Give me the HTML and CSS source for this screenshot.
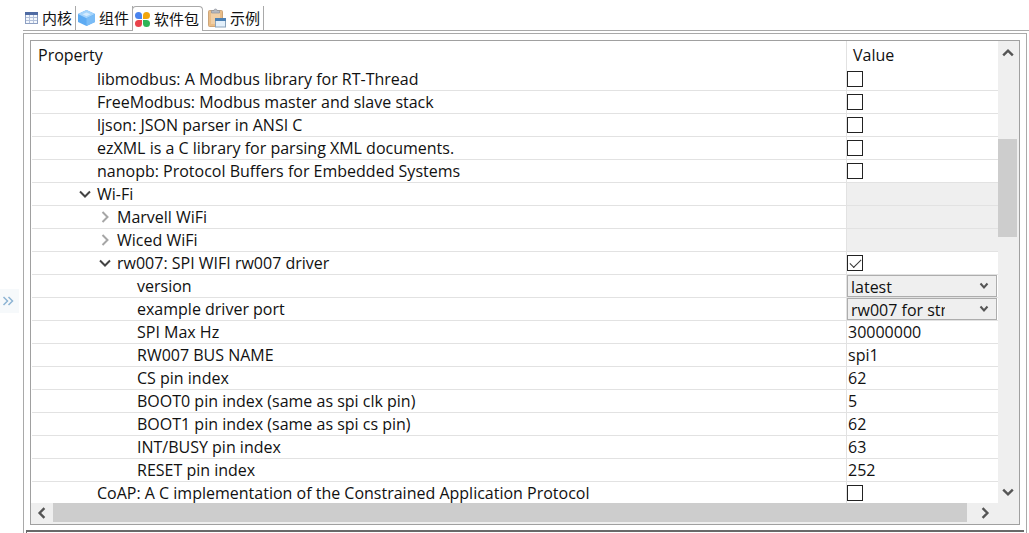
FILE: index.html
```
<!DOCTYPE html>
<html lang="zh-CN">
<head>
<meta charset="utf-8">
<title>RT-Thread Settings</title>
<link rel="stylesheet" href="styles.css">
</head>
<body>
<div class="app">
  <aside class="gutter">
    <button class="expand" type="button" aria-label="Expand">
      <svg width="12" height="10" viewBox="0 0 12 10"><path d="M1.500 1l4 4-4 4M6.500 1l4 4-4 4" fill="none" stroke="#8db4d4" stroke-width="1.500"/></svg>
    </button>
  </aside>
  <main class="editor">
    <nav class="tabs" role="tablist">
      <button class="tab" type="button" role="tab">
        <svg width="13" height="12" viewBox="0 0 13 12"><rect x=".5" y=".5" width="12" height="11" fill="#f4f8fd" stroke="#8d9fc2"/><path d="M0 0h13v3H0z" fill="#4f6ba3"/><path d="M1 5.500h11M1 8.500h11M4.500 3v8M8.500 3v8" stroke="#b4c1da"/></svg>
        <span>内核</span>
      </button>
      <button class="tab" type="button" role="tab">
        <svg width="17" height="16" viewBox="0 0 17 16"><path d="M8.500 0L17 4v8l-8.500 4L0 12V4z" fill="#5dabf3"/><path d="M8.500 0L17 4 8.500 8.300 0 4z" fill="#a5d4fb"/><path d="M8.500 8.300L17 4v8l-8.500 4z" fill="#7abcf6"/><path d="M8.500 2.500l4 1.700-4 2-4-2z" fill="#d4ebfe"/></svg>
        <span>组件</span>
      </button>
      <button class="tab tab-active" type="button" role="tab" aria-selected="true">
        <svg width="15" height="15" viewBox="0 0 15 15"><path d="M3.500 0a3.500 3.500 0 0 1 3.500 3.500V7H3.500a3.500 3.500 0 0 1 0-7z" fill="#4a84ee"/><path d="M11.500 0a3.500 3.500 0 0 1 0 7H8V3.500A3.500 3.500 0 0 1 11.500 0z" fill="#f2a60c"/><path d="M3.500 8H7v3.500A3.500 3.500 0 1 1 3.500 8z" fill="#e9434b"/><path d="M8 8h3.500A3.500 3.500 0 1 1 8 11.500z" fill="#2fb457"/></svg>
        <span>软件包</span>
      </button>
      <button class="tab tab-last" type="button" role="tab">
        <svg width="18" height="20" viewBox="0 0 18 20"><rect x=".5" y="2.500" width="14" height="16" rx="1" fill="#e9bd88" stroke="#cda578"/><path d="M3 5h9v11H3z" fill="#f0cfa6"/><path d="M3.500 5V2.500H6a1.500 1.500 0 0 1 3 0h2.500V5z" fill="#b5b9c0" stroke="#8f949c" stroke-width=".7"/><rect x="7.500" y="10.500" width="10" height="8.500" fill="#e3f0fb" stroke="#8aa3bb"/><path d="M7 10h11v3H7z" fill="#4b80b4"/></svg>
        <span>示例</span>
      </button>
    </nav>
    <div class="panel">
      <section class="tree">
        <div class="view">
          <table class="grid">
            <colgroup><col class="col-name"><col class="col-value"></colgroup>
            <thead><tr><th>Property</th><th>Value</th></tr></thead>
            <tbody>
              <tr><td class="l1"><label for="c1">libmodbus: A Modbus library for RT-Thread</label></td><td><input id="c1" class="check" type="checkbox"></td></tr>
              <tr><td class="l1"><label for="c2">FreeModbus: Modbus master and slave stack</label></td><td><input id="c2" class="check" type="checkbox"></td></tr>
              <tr><td class="l1"><label for="c3">ljson: JSON parser in ANSI C</label></td><td><input id="c3" class="check" type="checkbox"></td></tr>
              <tr><td class="l1"><label for="c4">ezXML is a C library for parsing XML documents.</label></td><td><input id="c4" class="check" type="checkbox"></td></tr>
              <tr><td class="l1"><label for="c5">nanopb: Protocol Buffers for Embedded Systems</label></td><td><input id="c5" class="check" type="checkbox"></td></tr>
              <tr><td class="l1 node"><div class="name"><svg class="arrow" viewBox="0 0 12 12"><path class="open" d="M1 3.500l5 5 5-5"/></svg>Wi-Fi</div></td><td class="empty"></td></tr>
              <tr><td class="l2 node"><div class="name"><svg class="arrow" viewBox="0 0 12 12"><path class="closed" d="M3.500 1l5 5-5 5"/></svg>Marvell WiFi</div></td><td class="empty"></td></tr>
              <tr><td class="l2 node"><div class="name"><svg class="arrow" viewBox="0 0 12 12"><path class="closed" d="M3.500 1l5 5-5 5"/></svg>Wiced WiFi</div></td><td class="empty"></td></tr>
              <tr><td class="l2 node"><div class="name"><svg class="arrow" viewBox="0 0 12 12"><path class="open" d="M1 3.500l5 5 5-5"/></svg><label for="c6">rw007: SPI WIFI rw007 driver</label></div></td><td><input id="c6" class="check" type="checkbox" checked></td></tr>
              <tr><td class="l3"><label for="s1">version</label></td><td><div class="combo"><select id="s1"><option>latest</option></select><svg viewBox="0 0 10 8"><path d="M1.500 1.500L5 5.500l3.500-4"/></svg></div></td></tr>
              <tr><td class="l3"><label for="s2">example driver port</label></td><td><div class="combo"><select id="s2"><option>rw007 for stm32</option></select><svg viewBox="0 0 10 8"><path d="M1.500 1.500L5 5.500l3.500-4"/></svg></div></td></tr>
              <tr><td class="l3">SPI Max Hz</td><td>30000000</td></tr>
              <tr><td class="l3">RW007 BUS NAME</td><td>spi1</td></tr>
              <tr><td class="l3">CS pin index</td><td>62</td></tr>
              <tr><td class="l3">BOOT0 pin index (same as spi clk pin)</td><td>5</td></tr>
              <tr><td class="l3">BOOT1 pin index (same as spi cs pin)</td><td>62</td></tr>
              <tr><td class="l3">INT/BUSY pin index</td><td>63</td></tr>
              <tr><td class="l3">RESET pin index</td><td>252</td></tr>
              <tr><td class="l1"><label for="c7">CoAP: A C implementation of the Constrained Application Protocol</label></td><td><input id="c7" class="check" type="checkbox"></td></tr>
            </tbody>
          </table>
        </div>
        <div class="vbar">
          <button type="button" aria-label="Scroll up"><svg viewBox="0 0 10 10"><path d="M1 7l4-4 4 4"/></svg></button>
          <div class="vtrack"><div class="vthumb"></div></div>
          <button type="button" aria-label="Scroll down"><svg viewBox="0 0 10 10"><path d="M1 3l4 4 4-4"/></svg></button>
        </div>
        <div class="hbar">
          <button type="button" aria-label="Scroll left"><svg viewBox="0 0 10 10"><path d="M7 1L3 5l4 4"/></svg></button>
          <div class="hthumb"></div>
          <button class="right" type="button" aria-label="Scroll right"><svg viewBox="0 0 10 10"><path d="M3 1l4 4-4 4"/></svg></button>
        </div>
      </section>
      <div class="next"></div>
    </div>
  </main>
</div>
</body>
</html>
```
FILE: styles.css
```
* { box-sizing: border-box; }
body {
  margin: 0;
  background: #fff;
  color: #111;
  font: 16px/22px "Open Sans", "Noto Sans CJK SC", sans-serif;
}
button { margin: 0; padding: 0; border: 0; background: none; font: inherit; color: inherit; }
svg { display: block; flex: none; }

.app { display: flex; height: 100vh; }
.gutter { width: 23px; padding-top: 289px; flex: none; }
.expand {
  display: flex; align-items: center; justify-content: center;
  width: 19px; height: 24px; padding-right: 4px;
  background: #f6f9fb;
}
.editor { display: flex; flex-direction: column; flex: 1; min-width: 0; }

.tabs { display: flex; align-items: flex-end; height: 31px; padding-top: 6px; border-bottom: 1px solid #a9a9a9; }
.tab {
  display: flex; align-items: center; gap: 4px;
  height: 24px; padding: 0 3px 0 2px;
  border-right: 1px solid #a9a9a9;
  font: 15px/24px "Noto Sans CJK SC", sans-serif;
  white-space: nowrap;
}
.tab-active {
  height: 25px; margin: 0 0 -1px -1px;
  background: #fff;
  border: 1px solid #a9a9a9; border-bottom: 0;
  border-radius: 4px 4px 0 0;
}
.tab-last { padding-left: 5px; }

.panel {
  display: flex; flex-direction: column; flex: 1; min-height: 0;
  margin: 2px 2px 0 0; padding: 6px 6px 0;
  border: 1px solid #a9a9a9; border-bottom: 0;
}
.tree {
  display: grid; grid-template-columns: 1fr 21px; grid-template-rows: 1fr 21px;
  flex: 1; min-height: 0;
  border: 1px solid #a0a0a0;
}
.view { overflow: hidden; min-height: 0; padding-left: 1px; }
.next { flex: none; height: 3px; margin: 5px -4px 0; border: 2px solid #696969; border-width: 2px 0 0 1px; }

.grid { width: 100%; table-layout: fixed; border-collapse: separate; border-spacing: 0; }
.col-value { width: 152px; }
.grid th { height: 27px; padding: 1px 6px 0; text-align: left; font-weight: 400; }
.grid td { height: 23px; padding: 0 0 0 1px; border-bottom: 1px solid #e2e2e2; white-space: nowrap; }
.grid th + th, .grid td + td { border-left: 1px solid #e2e2e2; }
.grid td.l1 { padding-left: 65px; }
.grid td.l2 { padding-left: 85px; }
.grid td.l3 { padding-left: 105px; }
.grid td.l1.node { padding-left: 47px; }
.grid td.l2.node { padding-left: 67px; }
.grid td.empty { background: #efefef; }
.name { display: flex; align-items: center; gap: 6px; }
.arrow { width: 12px; height: 12px; fill: none; stroke-width: 2; }
.open { stroke: #444; }
.closed { stroke: #a6a6a6; }

.check {
  display: block; appearance: none;
  width: 16px; height: 16px; margin: 0;
  border: 1px solid #222; background: #fff;
}
.grid td:has(.check), .grid td:has(.combo) { padding-left: 0; }
.check:checked::before {
  content: ""; display: block;
  width: 10px; height: 5px; margin: 3px 0 0 2px;
  border: solid #333; border-width: 0 0 1px 1px;
  transform: rotate(-45deg);
}
.combo { display: grid; grid-template-columns: 1fr 22px; align-items: center; height: 22px; margin-right: 1px; border: 1px solid #adadad; background: #efefef; }
.combo select {
  grid-area: 1 / 1 / 2 / 3; appearance: none;
  width: 100%; height: 20px; margin: 0; padding: 0 51px 0 3px;
  border: 0; background: transparent; color: inherit; font: inherit;
}
.combo svg {
  grid-area: 1 / 2; width: 10px; height: 8px; margin-left: 5px;
  fill: none; stroke: #555; stroke-width: 2; pointer-events: none;
}

.vbar, .hbar { display: flex; background: #efefef; }
.vbar { flex-direction: column; padding-right: 1px; }
.vbar button { display: flex; align-items: center; justify-content: center; height: 23px; flex: none; }
.vtrack { flex: 1; padding-top: 75px; }
.vthumb { height: 98px; margin-right: 1px; background: #cdcdcd; }
.hbar { grid-column: 1 / 3; padding-bottom: 2px; }
.hbar button { display: flex; align-items: center; justify-content: center; width: 22px; flex: none; }
.hbar .right { width: 36px; margin-right: 16px; }
.hthumb { flex: 1; background: #cdcdcd; }
.vbar svg, .hbar svg { width: 12px; height: 12px; fill: none; stroke: #555; stroke-width: 2; }
```
